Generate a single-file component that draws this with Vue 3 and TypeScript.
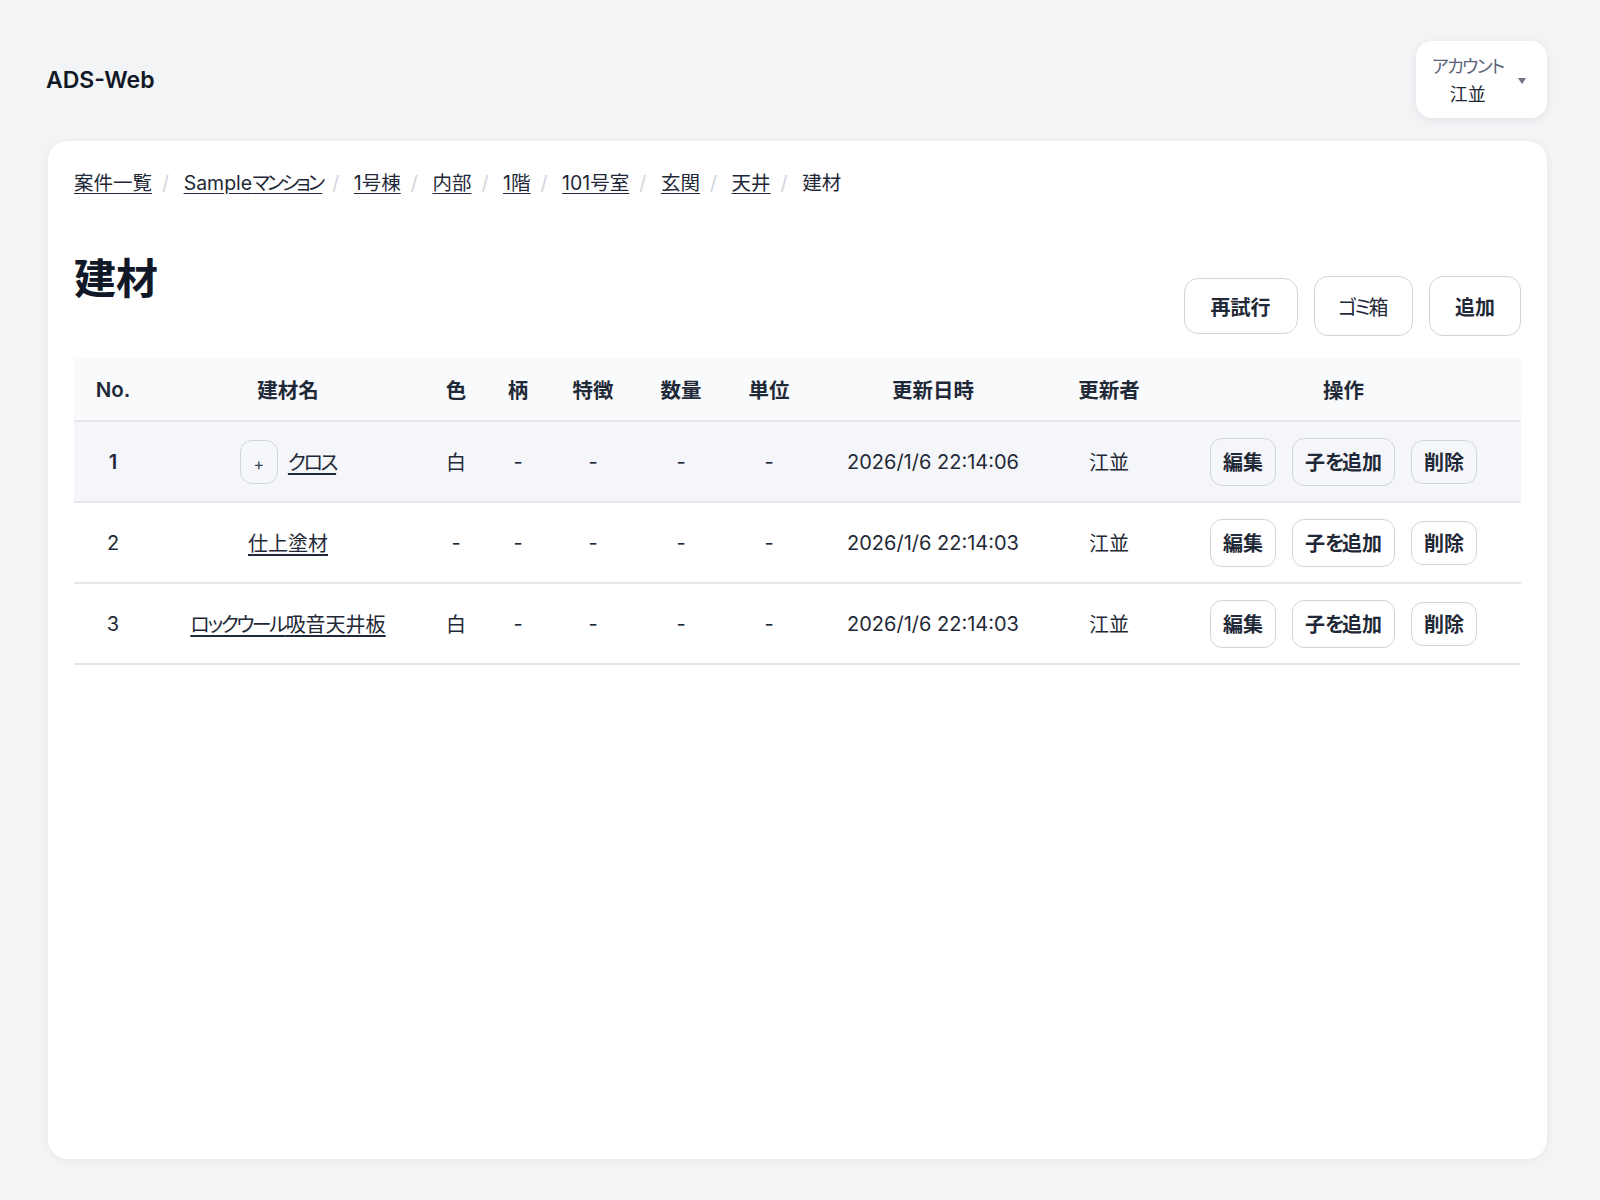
<script setup lang="ts">
const crumbs = ['案件一覧', 'Sampleマンション', '1号棟', '内部', '1階', '101号室', '玄関', '天井']

const columns = [
  { label: 'No.', width: 78 },
  { label: '建材名', width: 272 },
  { label: '色', width: 64 },
  { label: '柄', width: 60 },
  { label: '特徴', width: 90 },
  { label: '数量', width: 86 },
  { label: '単位', width: 90 },
  { label: '更新日時', width: 238 },
  { label: '更新者', width: 114 },
  { label: '操作', width: 355 }
]

const materials = [
  { no: 1, name: 'クロス', color: '白', updatedAt: '2026/1/6 22:14:06', hasChildren: true },
  { no: 2, name: '仕上塗材', color: '-', updatedAt: '2026/1/6 22:14:03', hasChildren: false },
  { no: 3, name: 'ロックウール吸音天井板', color: '白', updatedAt: '2026/1/6 22:14:03', hasChildren: false }
]

// かな部分だけ字詰めするために分割する
const split = (text: string) => text.match(/[\u3040-\u30ff]+|[^\u3040-\u30ff]+/g) ?? []
const isKana = (part: string) => /^[\u3040-\u30ff]/.test(part)
</script>

<template>
  <div class="page">
    <header class="topbar">
      <div class="brand">ADS-Web</div>
      <button class="account">
        <span class="account-text">
          <span class="account-label">アカウント</span>
          <span class="account-name">江並</span>
        </span>
        <span class="caret"></span>
      </button>
    </header>

    <main class="card">
      <nav class="breadcrumb">
        <template v-for="crumb in crumbs" :key="crumb">
          <a href="#" class="crumb"><span v-for="part in split(crumb)" :key="part" :class="{ kana: isKana(part) }">{{ part }}</span></a>
          <span class="sep">/</span>
        </template>
        <span class="current">建材</span>
      </nav>

      <div class="title-row">
        <h1>建材</h1>
        <div class="actions">
          <button class="btn retry">再試行</button>
          <button class="btn trash"><span class="kana">ゴミ</span>箱</button>
          <button class="btn add">追加</button>
        </div>
      </div>

      <table class="table">
        <colgroup>
          <col v-for="col in columns" :key="col.label" :style="{ width: col.width + 'px' }" />
        </colgroup>
        <thead>
          <tr>
            <th v-for="col in columns" :key="col.label">{{ col.label }}</th>
          </tr>
        </thead>
        <tbody>
          <tr v-for="item in materials" :key="item.no" :class="{ expandable: item.hasChildren }">
            <td class="no">{{ item.no }}</td>
            <td>
              <div class="name-cell">
                <button v-if="item.hasChildren" class="toggle">+</button>
                <a href="#" class="name"><span v-for="part in split(item.name)" :key="part" :class="{ kana: isKana(part) }">{{ part }}</span></a>
              </div>
            </td>
            <td>{{ item.color }}</td>
            <td>-</td>
            <td>-</td>
            <td>-</td>
            <td>-</td>
            <td>{{ item.updatedAt }}</td>
            <td>江並</td>
            <td>
              <div class="row-actions">
                <button class="row-btn">編集</button>
                <button class="row-btn">子<span class="kana">を</span>追加</button>
                <button class="row-btn delete">削除</button>
              </div>
            </td>
          </tr>
        </tbody>
      </table>
    </main>
  </div>
</template>

<style>
body {
  background: #f3f4f6;
}
</style>

<style scoped>
.page {
  box-sizing: border-box;
  min-height: 1200px;
  display: flex;
  flex-direction: column;
  padding: 41px 53px 41px 48px;
  background: #f3f4f6;
  color: #1f2937;
  font-family: Inter, "Noto Sans CJK JP", sans-serif;
  font-size: 20px;
  font-feature-settings: "palt";
}

button {
  font-family: inherit;
  font-feature-settings: inherit;
  cursor: pointer;
}

.kana {
  letter-spacing: -0.12em;
}

.topbar {
  display: flex;
  justify-content: space-between;
  align-items: center;
  margin-bottom: 23px;
}

.brand {
  margin-left: -2px;
  font-size: 23px;
  font-weight: 600;
  color: #111827;
}

.account {
  display: flex;
  align-items: center;
  gap: 15px;
  box-sizing: border-box;
  width: 131px;
  height: 77px;
  padding: 2px 20px 0 16px;
  border: none;
  border-radius: 16px;
  background: #fff;
  box-shadow: 0 2px 8px rgba(17, 24, 39, 0.08);
}

.account-text {
  display: flex;
  flex-direction: column;
  align-items: center;
  gap: 2px;
  font-size: 18px;
  line-height: 26px;
  white-space: nowrap;
}

.account-label {
  color: #5b6478;
  letter-spacing: -0.09em;
}

.account-name {
  color: #1f2937;
}

.caret {
  flex-shrink: 0;
  width: 0;
  height: 0;
  border-left: 4px solid transparent;
  border-right: 4px solid transparent;
  border-top: 6px solid #6b7280;
}

.card {
  flex: 1;
  padding: 26px;
  border-radius: 20px;
  background: #fff;
  box-shadow: 0 1px 8px rgba(17, 24, 39, 0.06);
}

.breadcrumb {
  display: flex;
  align-items: center;
  height: 32px;
  margin-bottom: 50px;
  font-size: 19.5px;
  line-height: 32px;
}

.crumb .kana {
  letter-spacing: -0.15em;
}

.crumb,
.name {
  color: #1f2937;
  text-decoration: underline;
  text-underline-offset: 3px;
}

.sep {
  margin: 0 14.6px 0 10px;
  color: #d1d5db;
}

.title-row {
  display: flex;
  justify-content: space-between;
  align-items: flex-start;
  margin-bottom: 22px;
}

h1 {
  margin: 0;
  font-size: 42px;
  font-weight: 700;
  line-height: 60px;
  color: #111827;
}

.actions {
  display: flex;
  align-items: center;
  gap: 16px;
  margin-top: 27px;
}

.btn {
  height: 60px;
  padding: 0 25px;
  border: 1.5px solid #d1d5db;
  border-radius: 14px;
  background: #fff;
  color: #1f2937;
  font-size: 20px;
  font-weight: 600;
}

.btn.retry {
  height: 56px;
  padding: 0 26px;
}

.btn.trash {
  padding: 0 23.5px;
  font-weight: 400;
}

.table {
  width: 100%;
  table-layout: fixed;
  border-collapse: collapse;
}

th {
  height: 62px;
  padding: 0;
  border-bottom: 2px solid #e5e7eb;
  background: #f9fafb;
  font-size: 20.5px;
  font-weight: 600;
  text-align: center;
  color: #1f2937;
}

td {
  height: 79px;
  padding: 0;
  border-bottom: 2px solid #e5e7eb;
  text-align: center;
  color: #1f2937;
}

.expandable td {
  background: #f5f6fa;
}

.expandable .no {
  font-weight: 600;
}

.name-cell {
  display: flex;
  justify-content: center;
  align-items: center;
  gap: 10px;
}

.toggle {
  box-sizing: border-box;
  width: 38px;
  height: 44px;
  padding: 4px 0 0;
  border: 1.5px solid #d1d5db;
  border-radius: 12px;
  background: transparent;
  color: #374151;
  font-size: 16px;
}

.row-actions {
  display: flex;
  justify-content: center;
  align-items: center;
  gap: 16px;
}

.row-btn {
  box-sizing: border-box;
  height: 48px;
  padding: 0 12px;
  border: 1.5px solid #d1d5db;
  border-radius: 12px;
  background: #fff;
  color: #1f2937;
  font-size: 20px;
  font-weight: 600;
  white-space: nowrap;
}

.expandable .row-btn {
  background: #f5f6fa;
}

.row-btn.delete {
  height: 44px;
}
</style>
